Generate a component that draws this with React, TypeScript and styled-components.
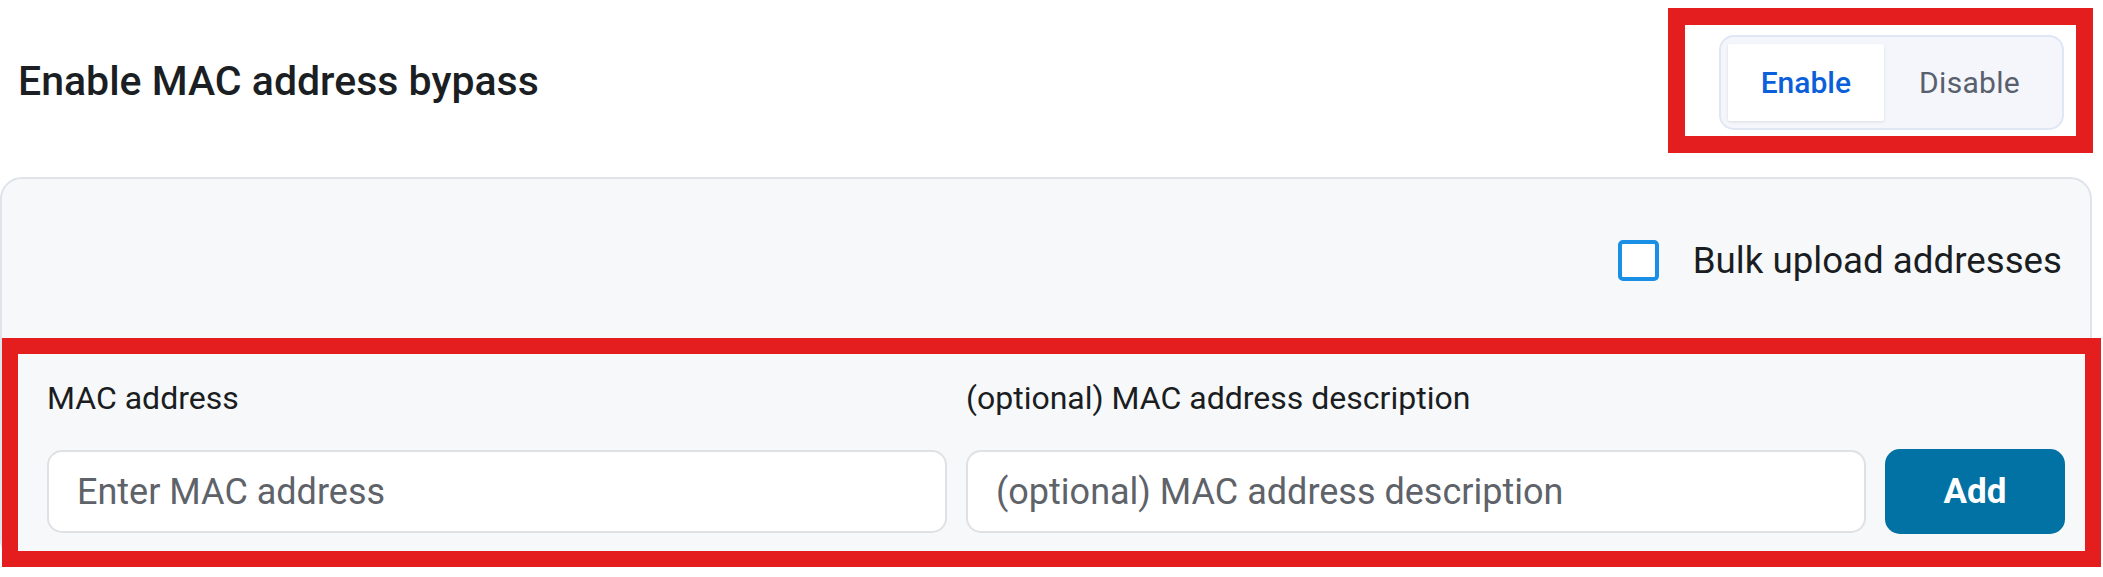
import React, { useState } from "react";
import styled, { createGlobalStyle } from "styled-components";

const GlobalStyle = createGlobalStyle`
  html, body {
    margin: 0;
    padding: 0;
    background: #ffffff;
    font-family: Roboto, "Noto Sans", "Liberation Sans", sans-serif;
    color: #1a1d21;
  }
  * {
    box-sizing: border-box;
  }
`;

const Page = styled.div`
  position: relative;
  width: 2103px;
  height: 577px;
  overflow: hidden;
`;

const Header = styled.header`
  display: flex;
  align-items: flex-start;
  justify-content: space-between;
  padding: 35px 39px 0 18px;
  height: 177px;
`;

const Title = styled.h2`
  margin: 0;
  height: 95px;
  display: flex;
  align-items: center;
  font-size: 41px;
  font-weight: 500;
  color: #1b1f24;
  padding-bottom: 3px;
`;

const Toggle = styled.div`
  display: flex;
  padding: 7px;
  height: 95px;
  border: 2px solid #dfe6f4;
  border-radius: 15px;
  background: #f4f6fb;
`;

const ToggleOption = styled.button<{ $active?: boolean }>`
  border: none;
  margin: 0;
  font-family: inherit;
  font-size: 30px;
  font-weight: ${(p) => (p.$active ? 500 : 400)};
  letter-spacing: ${(p) => (p.$active ? 0 : 0.3)}px;
  padding: 0 ${(p) => (p.$active ? 33 : 35)}px;
  border-radius: 2px;
  cursor: pointer;
  color: ${(p) => (p.$active ? "#0b5fd9" : "#58606e")};
  background: ${(p) => (p.$active ? "#ffffff" : "transparent")};
  box-shadow: ${(p) => (p.$active ? "0 1px 3px rgba(30, 40, 70, 0.12)" : "none")};
`;

const Panel = styled.section`
  margin-right: 11px;
  height: 385px;
  border: 2px solid #dfe3ea;
  border-radius: 22px;
  background: #f7f8fa;
`;

const BulkRow = styled.label`
  display: flex;
  align-items: center;
  justify-content: flex-end;
  gap: 34px;
  height: 159px;
  padding: 4px 28px 0 0;
  font-size: 36.7px;
  color: #1a1d21;
  cursor: pointer;
`;

const CheckBox = styled.span<{ $checked: boolean }>`
  width: 41px;
  height: 41px;
  border: 4px solid #1a8fe6;
  border-radius: 5px;
  background: ${(p) => (p.$checked ? "#1a8fe6" : "#ffffff")};
`;

const Form = styled.div`
  display: grid;
  grid-template-columns: 1fr 1fr 180px;
  column-gap: 19px;
  row-gap: 33px;
  padding: 42px 25px 0 45px;
  align-items: center;
`;

const FieldLabel = styled.div`
  font-size: 32px;
  line-height: 36px;
  color: #1a1d21;
`;

const TextInput = styled.input`
  height: 83px;
  width: 100%;
  border: 2px solid #dfe1e5;
  border-radius: 15px;
  background: #ffffff;
  padding: 0 28px;
  font-family: inherit;
  font-size: 36px;
  color: #1a1d21;
  outline: none;

  &::placeholder {
    color: #5e6269;
  }
`;

const AddButton = styled.button`
  height: 85px;
  border: none;
  border-radius: 15px;
  background: #0271a3;
  color: #ffffff;
  font-family: inherit;
  font-size: 35px;
  font-weight: 700;
  cursor: pointer;
`;

const Highlight = styled.div<{ $thick: number }>`
  position: absolute;
  border: ${(p) => p.$thick}px solid #e41d1f;
  pointer-events: none;
`;

export default function App() {
  const [enabled, setEnabled] = useState(true);
  const [bulk, setBulk] = useState(false);

  return (
    <Page>
      <GlobalStyle />
      <Header>
        <Title>Enable MAC address bypass</Title>
        <Toggle>
          <ToggleOption $active={enabled} onClick={() => setEnabled(true)}>
            Enable
          </ToggleOption>
          <ToggleOption $active={!enabled} onClick={() => setEnabled(false)}>
            Disable
          </ToggleOption>
        </Toggle>
      </Header>
      <Panel>
        <BulkRow onClick={() => setBulk(!bulk)}>
          <CheckBox $checked={bulk} />
          Bulk upload addresses
        </BulkRow>
        <Form>
          <FieldLabel>MAC address</FieldLabel>
          <FieldLabel>(optional) MAC address description</FieldLabel>
          <span />
          <TextInput placeholder="Enter MAC address" />
          <TextInput placeholder="(optional) MAC address description" />
          <AddButton>Add</AddButton>
        </Form>
      </Panel>
      <Highlight $thick={17} style={{ left: 1668, top: 8, width: 425, height: 145 }} />
      <Highlight $thick={16} style={{ left: 2, top: 338, width: 2099, height: 229 }} />
    </Page>
  );
}
